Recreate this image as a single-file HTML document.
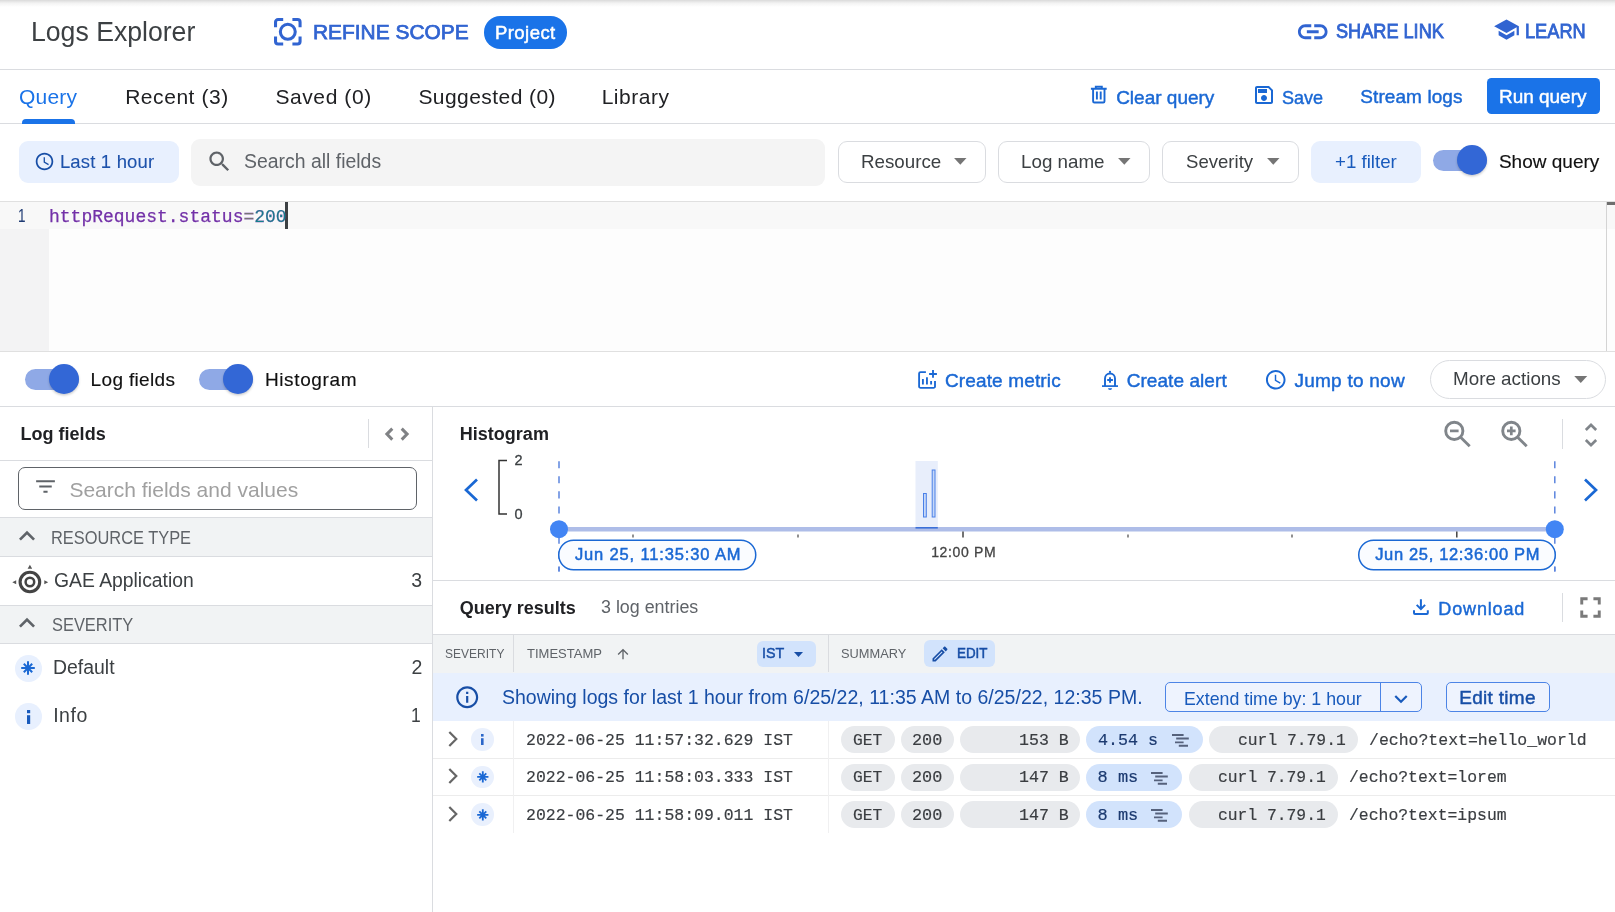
<!DOCTYPE html>
<html lang="en">
<head>
<meta charset="utf-8">
<title>Logs Explorer</title>
<style>
*{box-sizing:border-box;margin:0;padding:0}
html,body{width:1615px;height:912px;overflow:hidden;background:#fff}
body{position:relative;font-family:"Liberation Sans",sans-serif;-webkit-font-smoothing:antialiased}
.a{position:absolute}
.t{position:absolute;white-space:nowrap;transform-origin:0 0;font-family:"Liberation Sans",sans-serif}
.t.m{font-family:"Liberation Mono",monospace}
.hl{position:absolute;left:0;width:1615px;height:1px;background:#dadce0}
.vl{position:absolute;width:1px;background:#dadce0}
svg{position:absolute;overflow:visible}
.chip{position:absolute;height:27px;border-radius:13.5px;background:#e8eaed}
.chip.b{background:#d2e3fc}
.btn{position:absolute;border:1px solid #dadce0;border-radius:9px;background:#fff}
</style>
</head>
<body>
<div id="root" style="position:absolute;left:0;top:0;width:1615px;height:912px;will-change:transform">
<!-- top shadow -->
<div class="a" style="left:0;top:0;width:1615px;height:7px;background:linear-gradient(#dadada,#f3f3f3 45%,#fff)"></div>

<!-- ===== header ===== -->
<div class="hl" style="top:69px"></div>
<!-- refine scope icon -->
<svg style="left:274.200px;top:18.200px" width="27.600" height="27.600" viewBox="0 0 27 27" fill="none" stroke="#3164d1" stroke-width="3">
 <path d="M1.5 9V4a2.5 2.5 0 0 1 2.5-2.5h5M18 1.5h5a2.5 2.5 0 0 1 2.500 2.5v5M25.500 18v5a2.500 2.500 0 0 1-2.500 2.500h-5M9 25.500H4a2.500 2.500 0 0 1-2.500-2.500v-5"/>
 <circle cx="13.5" cy="13.500" r="7.300"/>
</svg>
<div class="a" style="left:484px;top:16px;width:83px;height:32.500px;border-radius:16.250px;background:#1a73e8"></div>
<!-- link icon -->
<svg style="left:1295px;top:13.750px" width="35.500" height="35.500" viewBox="0 0 24 24" fill="#3164d1"><path d="M3.9 12c0-1.710 1.390-3.100 3.100-3.100h4V7H7c-2.760 0-5 2.240-5 5s2.240 5 5 5h4v-1.900H7c-1.710 0-3.100-1.390-3.100-3.100zM8 13h8v-2H8v2zm9-6h-4v1.900h4c1.710 0 3.100 1.390 3.100 3.100s-1.390 3.100-3.100 3.100h-4V17h4c2.760 0 5-2.240 5-5s-2.240-5-5-5z"/></svg>
<!-- school icon -->
<svg style="left:1493px;top:16.200px" width="27" height="27" viewBox="0 0 24 24" fill="#3164d1"><path d="M5 13.180v4L12 21l7-3.820v-4L12 17l-7-3.820zM12 3L1 9l11 6 9-4.910V17h2V9L12 3z"/></svg>

<!-- ===== tabs row ===== -->
<div class="hl" style="top:123px"></div>
<div class="a" style="left:22px;top:119px;width:53px;height:4.500px;background:#1a73e8;border-radius:4px 4px 0 0"></div>
<!-- trash icon -->
<svg style="left:1090px;top:85px" width="18" height="20" viewBox="1090 85 18 20" fill="none" stroke="#1a68d4" stroke-width="1.900">
 <path d="M1090.900 88.700h15.800M1095.800 88V86.600h6v1.400M1093.100 88.700v12.500a1.300 1.300 0 0 0 1.300 1.300h8.800a1.300 1.300 0 0 0 1.300-1.300V88.700M1096.900 91.500v8M1100.700 91.500v8"/>
</svg>
<!-- save icon -->
<svg style="left:1251.500px;top:83px" width="24" height="24" viewBox="0 0 24 24" fill="#1a68d4"><path d="M17 3H5c-1.110 0-2 .9-2 2v14c0 1.100.890 2 2 2h14c1.100 0 2-.9 2-2V7l-4-4zm2 16H5V5h11.170L19 7.830V19zm-7-7c-1.660 0-3 1.340-3 3s1.340 3 3 3 3-1.340 3-3-1.340-3-3-3zM6 6h9v4H6z"/></svg>
<div class="a" style="left:1487px;top:78px;width:113px;height:36px;border-radius:4.500px;background:#1a73e8"></div>

<!-- ===== filter row ===== -->
<div class="a" style="left:19px;top:141px;width:160px;height:42px;border-radius:9px;background:#e8f0fe"></div>
<svg style="left:34px;top:150.800px" width="21" height="21" viewBox="0 0 24 24" fill="#174ea6"><path d="M11.990 2C6.470 2 2 6.480 2 12s4.470 10 9.990 10C17.520 22 22 17.520 22 12S17.520 2 11.990 2zM12 20c-4.420 0-8-3.580-8-8s3.580-8 8-8 8 3.580 8 8-3.580 8-8 8zm.5-13H11v6l5.250 3.150.75-1.230-4.500-2.670z"/></svg>
<div class="a" style="left:191px;top:138.500px;width:634px;height:47px;border-radius:9px;background:#f4f4f4"></div>
<svg style="left:205.500px;top:148px" width="27" height="27" viewBox="0 0 24 24" fill="#5f6368"><path d="M15.500 14h-.79l-.28-.27C15.410 12.590 16 11.110 16 9.500 16 5.910 13.090 3 9.500 3S3 5.910 3 9.500 5.910 16 9.500 16c1.610 0 3.090-.59 4.230-1.570l.27.280v.79l5 4.990L20.490 19l-4.990-5zm-6 0C7.010 14 5 11.990 5 9.500S7.010 5 9.500 5 14 7.010 14 9.500 11.990 14 9.500 14z"/></svg>
<div class="btn" style="left:838px;top:141px;width:148px;height:42px"></div>
<div class="btn" style="left:998px;top:141px;width:151.500px;height:42px"></div>
<div class="btn" style="left:1162px;top:141px;width:137px;height:42px"></div>
<svg style="left:954.200px;top:157.800px" width="12.600" height="6.700" viewBox="0 0 13 7" fill="#757575"><path d="M0 0h13L6.500 7z"/></svg>
<svg style="left:1117.700px;top:157.800px" width="12.600" height="6.700" viewBox="0 0 13 7" fill="#757575"><path d="M0 0h13L6.500 7z"/></svg>
<svg style="left:1267.200px;top:157.800px" width="12.600" height="6.700" viewBox="0 0 13 7" fill="#757575"><path d="M0 0h13L6.500 7z"/></svg>
<div class="a" style="left:1311px;top:141px;width:110px;height:42px;border-radius:9px;background:#e8f0fe"></div>
<!-- toggle: show query -->
<div class="a" style="left:1433px;top:150px;width:54px;height:21px;border-radius:10.500px;background:#8fa9e6"></div>
<div class="a" style="left:1457px;top:145px;width:30px;height:30px;border-radius:15px;background:#3367d6;box-shadow:0 1.500px 2.500px rgba(0,0,0,.2)"></div>

<!-- ===== editor ===== -->
<div class="a" style="left:0;top:201px;width:1615px;height:151px;background:#fdfdfd"></div>
<div class="a" style="left:0;top:229px;width:48.500px;height:122px;background:#f3f3f4"></div>
<div class="a" style="left:0;top:202px;width:1615px;height:27px;background:#f8f8f8"></div>
<div class="hl" style="top:201px;background:#e0e0e0"></div>
<div class="hl" style="top:351px;background:#e0e0e0"></div>
<div class="a" style="left:285.300px;top:202px;width:2.800px;height:26.500px;background:#3c4043"></div>
<div class="a" style="left:1606px;top:202px;width:1px;height:149px;background:#d4d4d4"></div>
<div class="a" style="left:1606.500px;top:202px;width:8.500px;height:3px;background:#6e6e6e"></div>

<!-- ===== toolbar ===== -->
<div class="hl" style="top:406px"></div>
<div class="a" style="left:25px;top:369px;width:54px;height:21px;border-radius:10.500px;background:#8fa9e6"></div>
<div class="a" style="left:49px;top:364px;width:30px;height:30px;border-radius:15px;background:#3367d6;box-shadow:0 1.500px 2.500px rgba(0,0,0,.2)"></div>
<div class="a" style="left:199px;top:369px;width:54px;height:21px;border-radius:10.500px;background:#8fa9e6"></div>
<div class="a" style="left:223px;top:364px;width:30px;height:30px;border-radius:15px;background:#3367d6;box-shadow:0 1.500px 2.500px rgba(0,0,0,.2)"></div>
<!-- add chart -->
<svg style="left:912px;top:364px" width="30" height="30" viewBox="912 364 30 30" fill="none" stroke="#1a68d4" stroke-width="1.850">
 <path d="M925.900 372.100H920.600a1.500 1.500 0 0 0-1.500 1.500V386.400a1.500 1.500 0 0 0 1.500 1.500H933.500a1.500 1.500 0 0 0 1.500-1.500V380.900"/>
 <path d="M933 370.100V377.750M929.100 374H936.900"/>
 <path d="M922.900 379V384.600M926.950 377.200V384.600M931.100 380.900V384.600"/>
</svg>
<!-- add alert -->
<svg style="left:1098px;top:366px" width="24" height="28" viewBox="1098 366 24 28" fill="none" stroke="#1a68d4" stroke-width="1.900">
 <path d="M1105 386V378.500a5 5 0 0 1 10 0V386"/>
 <path d="M1102 386.100H1118" stroke-width="1.700"/>
 <path d="M1110 377.200V382.700M1107.200 379.950H1112.900"/>
 <circle cx="1110" cy="371.900" r="1.100" fill="#1a68d4" stroke="none"/>
 <path d="M1108 388.300a2.050 1.600 0 0 0 4.100 0z" fill="#1a68d4" stroke="none"/>
</svg>
<!-- clock -->
<svg style="left:1264px;top:368px" width="23.500" height="23.500" viewBox="0 0 24 24" fill="#1a68d4"><path d="M11.990 2C6.470 2 2 6.480 2 12s4.470 10 9.990 10C17.520 22 22 17.520 22 12S17.520 2 11.990 2zM12 20c-4.420 0-8-3.580-8-8s3.580-8 8-8 8 3.580 8 8-3.580 8-8 8zm.5-13H11v6l5.250 3.150.75-1.230-4.500-2.670z"/></svg>
<div class="btn" style="left:1430px;top:360px;width:176px;height:39px;border-radius:19.500px"></div>
<svg style="left:1573.500px;top:376px" width="13.500" height="7" viewBox="0 0 13 7" fill="#757575"><path d="M0 0h13L6.500 7z"/></svg>

<!-- ===== left panel ===== -->
<div class="vl" style="left:432px;top:407px;height:505px"></div>
<div class="vl" style="left:368px;top:418.500px;height:29.500px"></div>
<svg style="left:380px;top:424px" width="34" height="20" viewBox="380 424 34 20" fill="none" stroke="#808285" stroke-width="3"><path d="M392.300 428.600L386.900 434.100L392.300 439.600M401.700 428.600L407.100 434.100L401.700 439.600"/></svg>
<div class="hl" style="top:460px;width:432px"></div>
<div class="a" style="left:18px;top:467px;width:399px;height:42.500px;border:1px solid #5f6368;border-radius:7px;background:#fff"></div>
<svg style="left:33px;top:474.300px" width="25" height="25" viewBox="0 0 24 24" fill="#5f6368"><path d="M10 18h4v-2h-4v2zM3 6v2h18V6H3zm3 7h12v-2H6v2z"/></svg>
<div class="a" style="left:0;top:517px;width:432px;height:40px;background:#f1f3f4;border-top:1px solid #dadce0;border-bottom:1px solid #dadce0"></div>
<svg style="left:11px;top:520px" width="32" height="32" viewBox="0 0 24 24" fill="#5f6368"><path d="M12 8l-6 6 1.410 1.410L12 10.830l4.590 4.580L18 14z"/></svg>
<!-- GAE icon -->
<svg style="left:10px;top:562px" width="40" height="34" viewBox="10 562 40 34" fill="none" stroke="#444">
 <circle cx="29.900" cy="582" r="9.800" stroke-width="3.100"/>
 <circle cx="29.900" cy="582" r="4.300" stroke-width="2.500"/>
 <path d="M29.900 564.800l2.300 3.900h-4.600z M12.300 582.200l3.900-2v4z M48.200 582.200l-3.900-2v4z" fill="#555" stroke="none"/>
</svg>
<div class="a" style="left:0;top:605px;width:432px;height:39px;background:#f1f3f4;border-top:1px solid #dadce0;border-bottom:1px solid #dadce0"></div>
<svg style="left:11px;top:607px" width="32" height="32" viewBox="0 0 24 24" fill="#5f6368"><path d="M12 8l-6 6 1.410 1.410L12 10.830l4.590 4.580L18 14z"/></svg>
<div class="a" style="left:15px;top:655px;width:26.500px;height:26.500px;border-radius:50%;background:#e8f0fe"></div>
<svg style="left:21.200px;top:661px" width="14" height="14" viewBox="-7 -7 14 14" stroke="#1a68d4" stroke-width="2"><path d="M0-6.800V6.800M-6.800 0H6.800M-4.200-4.200L4.200 4.200M-4.200 4.200L4.200-4.200"/></svg>
<div class="a" style="left:15px;top:703px;width:26.500px;height:26.500px;border-radius:50%;background:#e8f0fe"></div>
<svg style="left:26.500px;top:709.500px" width="3.200" height="14" viewBox="0 0 3.200 14" fill="#185abc"><rect x="0" y="0" width="3.200" height="3.200"/><rect x="0" y="5.200" width="3.200" height="8.800"/></svg>

<!-- ===== histogram ===== -->
<svg style="left:1440px;top:415px" width="100" height="40" viewBox="1440 415 100 40" fill="none" stroke="#80858a" stroke-width="2.900">
 <circle cx="1454.300" cy="430.900" r="8.600"/><path d="M1460.600 437.200L1469.700 446.300" stroke-width="2.800"/><path d="M1450 430.900h8.600" stroke-width="2.700"/>
 <circle cx="1511.300" cy="430.900" r="8.600"/><path d="M1517.600 437.200L1526.700 446.300" stroke-width="2.800"/><path d="M1507 430.900h8.600M1511.300 426.600v8.600" stroke-width="2.700"/>
</svg>
<div class="vl" style="left:1562px;top:419px;height:30px"></div>
<svg style="left:1575.200px;top:419px" width="32" height="32" viewBox="0 0 24 24" fill="#80858a"><path d="M12 5.830L15.170 9l1.410-1.410L12 3 7.410 7.590 8.830 9 12 5.830zm0 12.340L8.830 15l-1.410 1.410L12 21l4.590-4.590L15.170 15 12 18.170z"/></svg>
<svg style="left:432px;top:450px" width="1183" height="130" viewBox="432 450 1183 130" fill="none">
 <path d="M477 479.500L466 490l11 10.500" stroke="#1a68d4" stroke-width="2.700"/>
 <path d="M1585 479.500l11 10.500-11 10.500" stroke="#1a68d4" stroke-width="2.700"/>
 <path d="M507 460.500h-8v53.500h8" stroke="#333" stroke-width="1.500"/>
 <rect x="915.500" y="461" width="22.300" height="66.500" fill="#e8eefb"/>
 <rect x="923.500" y="493.500" width="2.800" height="23.500" fill="#c6d8f8" stroke="#4a80e8" stroke-width="1"/>
 <rect x="932.200" y="470" width="2.800" height="47" fill="#c6d8f8" stroke="#4a80e8" stroke-width="1"/>
 <path d="M559 461.200V571.500M1554.800 461.200V571.500" stroke="#5c85de" stroke-width="1.500" stroke-dasharray="7.100 7.970"/>
 <rect x="559" y="527" width="996" height="4.500" fill="#aebde8"/>
 <rect x="915.500" y="527" width="22.300" height="1.600" fill="#3b6fd8"/>
 <path d="M963 531.500v6M1456.800 531.500v6" stroke="#444" stroke-width="1.500"/>
 <path d="M633 534.500v3M798 534.500v3M1128 534.500v3M1292 534.500v3" stroke="#555" stroke-width="1.300"/>
 <circle cx="559" cy="529.200" r="9" fill="#4285f4"/>
 <circle cx="1554.800" cy="529.200" r="9" fill="#4285f4"/>
 <rect x="558.750" y="540.250" width="197" height="29.500" rx="14.750" fill="#fafcff" stroke="#1a68d4" stroke-width="1.500"/>
 <rect x="1358.750" y="540.250" width="196.500" height="29.500" rx="14.750" fill="#fafcff" stroke="#1a68d4" stroke-width="1.500"/>
 <path d="M559 566.600V571.500M1554.800 566.600V571.500" stroke="#5c85de" stroke-width="1.500"/>
</svg>
<div class="hl" style="left:433px;top:580px;width:1182px"></div>

<!-- ===== query results ===== -->
<svg style="left:1410px;top:596px" width="22" height="22" viewBox="1410 596 22 22" fill="none" stroke="#1a68d4" stroke-width="2"><path d="M1414 610.200v2.700a1 1 0 0 0 1 1h11.800a1 1 0 0 0 1-1v-2.700M1420.900 599.200v9.500M1416.700 604.900l4.200 4.200 4.200-4.200"/></svg>
<div class="vl" style="left:1562px;top:592.500px;height:29px"></div>
<svg style="left:1573px;top:590.300px" width="35" height="35" viewBox="0 0 24 24" fill="#7a7a7a"><path d="M7 14H5v5h5v-2H7v-3zm-2-4h2V7h3V5H5v5zm12 7h-3v2h5v-5h-2v3zM14 5v2h3v3h2V5h-5z"/></svg>
<div class="a" style="left:433px;top:634px;width:1182px;height:38.500px;background:#f1f3f4;border-top:1px solid #dadce0"></div>
<div class="vl" style="left:513px;top:635px;height:37px"></div>
<div class="vl" style="left:828px;top:635px;height:37px"></div>
<svg style="left:614.500px;top:645.500px" width="16" height="16" viewBox="0 0 24 24" fill="#5f6368"><path d="M4 12l1.410 1.410L11 7.830V20h2V7.830l5.580 5.590L20 12l-8-8-8 8z"/></svg>
<div class="a" style="left:757px;top:640.500px;width:59px;height:26px;border-radius:6px;background:#d2e3fc"></div>
<svg style="left:793.750px;top:651.500px" width="9" height="5" viewBox="0 0 13 7" fill="#174ea6"><path d="M0 0h13L6.500 7z"/></svg>
<div class="a" style="left:924.300px;top:640px;width:70.700px;height:26.600px;border-radius:6px;background:#d2e3fc"></div>
<svg style="left:930px;top:644px" width="20" height="20" viewBox="0 0 24 24" fill="#174ea6"><path d="M14.060 9.020l.92.920L5.920 19H5v-.92l9.060-9.060M17.660 3c-.25 0-.51.100-.7.290l-1.830 1.830 3.750 3.750 1.830-1.830c.39-.39.39-1.020 0-1.410l-2.340-2.340c-.2-.2-.45-.29-.71-.29zm-3.600 3.190L3 17.250V21h3.750L17.810 9.940l-3.750-3.750z"/></svg>
<!-- banner -->
<div class="a" style="left:433px;top:672.500px;width:1182px;height:48px;background:#e8f0fe"></div>
<svg style="left:453.800px;top:684.300px" width="26.400" height="26.400" viewBox="0 0 24 24" fill="#174ea6"><path d="M11 7h2v2h-2zm0 4h2v6h-2zm1-9C6.480 2 2 6.480 2 12s4.480 10 10 10 10-4.480 10-10S17.520 2 12 2zm0 18c-4.410 0-8-3.590-8-8s3.590-8 8-8 8 3.590 8 8-3.590 8-8 8z"/></svg>
<div class="a" style="left:1165.400px;top:682px;width:257px;height:29.500px;border:1px solid #4c84e6;border-radius:5px;background:#eef3fe"></div>
<div class="a" style="left:1380px;top:683px;width:1px;height:27.500px;background:#4c84e6"></div>
<svg style="left:1387.500px;top:685.500px" width="26" height="26" viewBox="0 0 24 24" fill="#185abc"><path d="M16.590 8.590L12 13.170 7.410 8.590 6 10l6 6 6-6z"/></svg>
<div class="a" style="left:1446px;top:682px;width:103.600px;height:29.500px;border:1px solid #4c84e6;border-radius:5px;background:#eef3fe"></div>

<!-- rows -->
<div class="hl" style="left:433px;top:758px;width:1182px;background:#ececec"></div>
<div class="hl" style="left:433px;top:795px;width:1182px;background:#ececec"></div>
<div class="vl" style="left:513px;top:721px;height:112px;background:#f0f0f1"></div>
<div class="vl" style="left:828px;top:721px;height:112px;background:#f0f0f1"></div>
<svg style="left:446px;top:728.90px" width="14" height="20" viewBox="446 0 14 20" fill="none" stroke="#666" stroke-width="2.200"><path d="M449.300 2.900L456.300 10L449.300 17.100"/></svg>
<div class="a" style="left:471.300px;top:728.25px;width:22.600px;height:22.600px;border-radius:50%;background:#e9f0fd"></div>
<svg style="left:481.300px;top:734.00px" width="2.600" height="11" viewBox="0 0 2.600 11" fill="#2a66c9"><rect width="2.600" height="2.600"/><rect y="4.200" width="2.600" height="6.800"/></svg>
<div class="chip" style="left:841px;top:726.25px;width:53.750px"></div>
<div class="chip" style="left:901px;top:726.25px;width:53px"></div>
<div class="chip" style="left:959.750px;top:726.25px;width:120px"></div>
<div class="chip b" style="left:1086px;top:726.25px;width:117px"></div>
<svg style="left:1172px;top:734.00px" width="17" height="13" viewBox="0 0 17 13" stroke="#56627c" stroke-width="1.900"><path d="M0 1h11.600M4.200 4.500h12.600M3 8.400h8.600M6.800 11.800h9.200"/></svg>
<div class="chip" style="left:1209px;top:726.25px;width:149.300px"></div>
<svg style="left:446px;top:766.40px" width="14" height="20" viewBox="446 0 14 20" fill="none" stroke="#666" stroke-width="2.200"><path d="M449.300 2.900L456.300 10L449.300 17.100"/></svg>
<div class="a" style="left:471.300px;top:765.75px;width:22.600px;height:22.600px;border-radius:50%;background:#e9f0fd"></div>
<svg style="left:476.800px;top:771.30px" width="11.600" height="11.600" viewBox="-7 -7 14 14" stroke="#1a68d4" stroke-width="2.200"><path d="M0-6.800V6.800M-6.800 0H6.800M-4.200-4.200L4.200 4.200M-4.200 4.200L4.200-4.200"/></svg>
<div class="chip" style="left:841px;top:763.75px;width:53.750px"></div>
<div class="chip" style="left:901px;top:763.75px;width:53px"></div>
<div class="chip" style="left:959.750px;top:763.75px;width:120px"></div>
<div class="chip b" style="left:1086px;top:763.75px;width:96px"></div>
<svg style="left:1151px;top:771.50px" width="17" height="13" viewBox="0 0 17 13" stroke="#56627c" stroke-width="1.900"><path d="M0 1h11.600M4.200 4.500h12.600M3 8.400h8.600M6.800 11.800h9.200"/></svg>
<div class="chip" style="left:1189px;top:763.75px;width:149.300px"></div>
<svg style="left:446px;top:803.90px" width="14" height="20" viewBox="446 0 14 20" fill="none" stroke="#666" stroke-width="2.200"><path d="M449.300 2.900L456.300 10L449.300 17.100"/></svg>
<div class="a" style="left:471.300px;top:803.25px;width:22.600px;height:22.600px;border-radius:50%;background:#e9f0fd"></div>
<svg style="left:476.800px;top:808.80px" width="11.600" height="11.600" viewBox="-7 -7 14 14" stroke="#1a68d4" stroke-width="2.200"><path d="M0-6.800V6.800M-6.800 0H6.800M-4.200-4.200L4.200 4.200M-4.200 4.200L4.200-4.200"/></svg>
<div class="chip" style="left:841px;top:801.25px;width:53.750px"></div>
<div class="chip" style="left:901px;top:801.25px;width:53px"></div>
<div class="chip" style="left:959.750px;top:801.25px;width:120px"></div>
<div class="chip b" style="left:1086px;top:801.25px;width:96px"></div>
<svg style="left:1151px;top:809.00px" width="17" height="13" viewBox="0 0 17 13" stroke="#56627c" stroke-width="1.900"><path d="M0 1h11.600M4.200 4.500h12.600M3 8.400h8.600M6.800 11.800h9.200"/></svg>
<div class="chip" style="left:1189px;top:801.25px;width:149.300px"></div>
<span id="t_title" class="t" style="left:30.78px;top:12.00px;font-size:27px;line-height:40px;color:#3c4043;transform:scaleX(0.9860);">Logs Explorer</span>
<span id="t_refine" class="t" style="left:312.66px;top:12.00px;font-size:21px;line-height:40px;color:#3164d1;transform:scaleX(0.9952);-webkit-text-stroke:0.75px #3164d1;">REFINE SCOPE</span>
<span id="t_project" class="t" style="left:494.95px;top:13.00px;font-size:18.5px;line-height:40px;color:#fff;letter-spacing:0.450px;-webkit-text-stroke:0.5px #fff;">Project</span>
<span id="t_share" class="t" style="left:1336.33px;top:11.00px;font-size:19.5px;line-height:40px;color:#3164d1;transform:scaleX(0.9302);-webkit-text-stroke:0.8px #3164d1;">SHARE LINK</span>
<span id="t_learn" class="t" style="left:1524.93px;top:11.00px;font-size:19.5px;line-height:40px;color:#3164d1;transform:scaleX(0.9328);-webkit-text-stroke:0.8px #3164d1;">LEARN</span>
<span id="t_tab1" class="t" style="left:18.90px;top:77.00px;font-size:21px;line-height:40px;color:#1a73e8;letter-spacing:0.250px;">Query</span>
<span id="t_tab2" class="t" style="left:125.15px;top:77.00px;font-size:21px;line-height:40px;color:#202124;letter-spacing:0.556px;">Recent (3)</span>
<span id="t_tab3" class="t" style="left:275.40px;top:77.00px;font-size:21px;line-height:40px;color:#202124;letter-spacing:0.594px;">Saved (0)</span>
<span id="t_tab4" class="t" style="left:418.40px;top:77.00px;font-size:21px;line-height:40px;color:#202124;letter-spacing:0.438px;">Suggested (0)</span>
<span id="t_tab5" class="t" style="left:601.65px;top:77.00px;font-size:21px;line-height:40px;color:#202124;letter-spacing:0.542px;">Library</span>
<span id="t_clear" class="t" style="left:1116.15px;top:78.00px;font-size:19px;line-height:40px;color:#1a68d4;-webkit-text-stroke:0.45px #1a68d4;">Clear query</span>
<span id="t_save" class="t" style="left:1281.93px;top:78.00px;font-size:19px;line-height:40px;color:#1a68d4;transform:scaleX(0.9491);-webkit-text-stroke:0.45px #1a68d4;">Save</span>
<span id="t_stream" class="t" style="left:1360.30px;top:77.00px;font-size:19px;line-height:40px;color:#1a68d4;letter-spacing:0.080px;-webkit-text-stroke:0.45px #1a68d4;">Stream logs</span>
<span id="t_run" class="t" style="left:1499.15px;top:77.00px;font-size:19px;line-height:40px;color:#fff;transform:scaleX(0.9971);-webkit-text-stroke:0.45px #fff;">Run query</span>
<span id="t_last" class="t" style="left:59.90px;top:142.00px;font-size:18.5px;line-height:40px;color:#1d52ab;letter-spacing:0.175px;-webkit-text-stroke:0.1px #1d52ab;">Last 1 hour</span>
<span id="t_search" class="t" style="left:243.90px;top:141.00px;font-size:19.5px;line-height:40px;color:#5f6368;transform:scaleX(0.9963);">Search all fields</span>
<span id="t_resource" class="t" style="left:860.92px;top:142.00px;font-size:19px;line-height:40px;color:#3c4043;transform:scaleX(0.9873);">Resource</span>
<span id="t_logname" class="t" style="left:1020.92px;top:142.00px;font-size:19px;line-height:40px;color:#3c4043;transform:scaleX(0.9878);">Log name</span>
<span id="t_severity" class="t" style="left:1185.92px;top:142.00px;font-size:19px;line-height:40px;color:#3c4043;transform:scaleX(0.9778);">Severity</span>
<span id="t_filter" class="t" style="left:1334.72px;top:142.00px;font-size:19px;line-height:40px;color:#185abc;transform:scaleX(0.9837);">+1 filter</span>
<span id="t_showq" class="t" style="left:1498.95px;top:142.00px;font-size:19px;line-height:40px;color:#111;-webkit-text-stroke:0.15px #111;">Show query</span>
<span id="t_ln" class="t" style="left:18.06px;top:196.00px;font-size:18px;line-height:40px;color:#1f3b73;transform:scaleX(0.7500);">1</span>
<span id="t_logf" class="t" style="left:90.60px;top:360.00px;font-size:19px;line-height:40px;color:#111;letter-spacing:0.339px;-webkit-text-stroke:0.15px #111;">Log fields</span>
<span id="t_histo" class="t" style="left:264.90px;top:360.00px;font-size:19px;line-height:40px;color:#111;letter-spacing:0.638px;-webkit-text-stroke:0.15px #111;">Histogram</span>
<span id="t_cmetric" class="t" style="left:944.95px;top:361.00px;font-size:19px;line-height:40px;color:#1a68d4;letter-spacing:0.142px;-webkit-text-stroke:0.45px #1a68d4;">Create metric</span>
<span id="t_calert" class="t" style="left:1126.65px;top:361.00px;font-size:19px;line-height:40px;color:#1a68d4;letter-spacing:0.068px;-webkit-text-stroke:0.45px #1a68d4;">Create alert</span>
<span id="t_jump" class="t" style="left:1294.40px;top:361.00px;font-size:19px;line-height:40px;color:#1a68d4;letter-spacing:0.250px;-webkit-text-stroke:0.45px #1a68d4;">Jump to now</span>
<span id="t_more" class="t" style="left:1452.91px;top:359.00px;font-size:19px;line-height:40px;color:#3c4043;transform:scaleX(0.9906);">More actions</span>
<span id="t_lfh" class="t" style="left:20.55px;top:414.00px;font-size:18px;line-height:40px;color:#202124;letter-spacing:0.011px;font-weight:700;">Log fields</span>
<span id="t_sfv" class="t" style="left:69.40px;top:470.00px;font-size:21px;line-height:40px;color:#a0a0a0;">Search fields and values</span>
<span id="t_restype" class="t" style="left:51.03px;top:518.00px;font-size:18px;line-height:40px;color:#5f6368;transform:scaleX(0.9109);">RESOURCE TYPE</span>
<span id="t_gae" class="t" style="left:53.91px;top:560.00px;font-size:19.5px;line-height:40px;color:#3c4043;transform:scaleX(0.9917);">GAE Application</span>
<span id="t_n3" class="t" style="left:411.18px;top:560.00px;font-size:19.5px;line-height:40px;color:#3c4043;">3</span>
<span id="t_sevh" class="t" style="left:51.72px;top:605.00px;font-size:18px;line-height:40px;color:#5f6368;transform:scaleX(0.9117);">SEVERITY</span>
<span id="t_default" class="t" style="left:53.41px;top:647.00px;font-size:19.5px;line-height:40px;color:#3c4043;transform:scaleX(0.9959);">Default</span>
<span id="t_n2" class="t" style="left:411.50px;top:647.00px;font-size:19.5px;line-height:40px;color:#3c4043;">2</span>
<span id="t_info" class="t" style="left:53.15px;top:695.00px;font-size:19.5px;line-height:40px;color:#3c4043;letter-spacing:0.533px;">Info</span>
<span id="t_n1" class="t" style="left:411.46px;top:695.00px;font-size:19.5px;line-height:40px;color:#3c4043;transform:scaleX(0.8941);">1</span>
<span id="t_hh" class="t" style="left:459.65px;top:414.00px;font-size:18px;line-height:40px;color:#202124;letter-spacing:0.031px;font-weight:700;">Histogram</span>
<span id="t_y2" class="t" style="left:514.50px;top:440.00px;font-size:14.5px;line-height:40px;color:#3c4043;-webkit-text-stroke:0.3px #3c4043;">2</span>
<span id="t_y0" class="t" style="left:514.38px;top:494.00px;font-size:14.5px;line-height:40px;color:#3c4043;-webkit-text-stroke:0.3px #3c4043;">0</span>
<span id="t_jun1" class="t" style="left:574.90px;top:534.00px;font-size:16.5px;line-height:40px;color:#1a68d4;letter-spacing:0.861px;-webkit-text-stroke:0.5px #1a68d4;">Jun 25, 11:35:30 AM</span>
<span id="t_noon" class="t" style="left:931.15px;top:532.00px;font-size:14px;line-height:40px;color:#444;letter-spacing:0.643px;-webkit-text-stroke:0.3px #444;">12:00 PM</span>
<span id="t_jun2" class="t" style="left:1375.15px;top:534.00px;font-size:16.5px;line-height:40px;color:#1a68d4;letter-spacing:0.667px;-webkit-text-stroke:0.5px #1a68d4;">Jun 25, 12:36:00 PM</span>
<span id="t_qr" class="t" style="left:459.65px;top:588.00px;font-size:18px;line-height:40px;color:#202124;font-weight:700;">Query results</span>
<span id="t_3log" class="t" style="left:600.66px;top:587.00px;font-size:18px;line-height:40px;color:#5f6368;transform:scaleX(0.9922);">3 log entries</span>
<span id="t_dl" class="t" style="left:1438.35px;top:589.00px;font-size:18px;line-height:40px;color:#1a68d4;letter-spacing:0.843px;-webkit-text-stroke:0.45px #1a68d4;">Download</span>
<span id="t_hsev" class="t" style="left:445.43px;top:634.00px;font-size:13.5px;line-height:40px;color:#5f6368;transform:scaleX(0.8901);">SEVERITY</span>
<span id="t_hts" class="t" style="left:526.66px;top:634.00px;font-size:13.5px;line-height:40px;color:#5f6368;transform:scaleX(0.9642);">TIMESTAMP</span>
<span id="t_ist" class="t" style="left:762.21px;top:633.00px;font-size:15px;line-height:40px;color:#174ea6;transform:scaleX(0.9545);-webkit-text-stroke:0.45px #174ea6;">IST</span>
<span id="t_hsum" class="t" style="left:840.89px;top:634.00px;font-size:13.5px;line-height:40px;color:#5f6368;transform:scaleX(0.9496);">SUMMARY</span>
<span id="t_edit" class="t" style="left:957.48px;top:633.00px;font-size:14.5px;line-height:40px;color:#174ea6;transform:scaleX(0.9219);-webkit-text-stroke:0.5px #174ea6;">EDIT</span>
<span id="t_banner" class="t" style="left:501.90px;top:677.00px;font-size:19.5px;line-height:40px;color:#174ea6;letter-spacing:0.021px;">Showing logs for last 1 hour from 6/25/22, 11:35 AM to 6/25/22, 12:35 PM.</span>
<span id="t_extend" class="t" style="left:1184.00px;top:679.00px;font-size:19px;line-height:40px;color:#185abc;transform:scaleX(0.9349);">Extend time by: 1 hour</span>
<span id="t_edittime" class="t" style="left:1459.15px;top:678.00px;font-size:19px;line-height:40px;color:#174ea6;letter-spacing:0.312px;-webkit-text-stroke:0.45px #174ea6;">Edit time</span>
<span id="t_code" class="t m" style="left:49.00px;top:197.00px;font-size:18px;line-height:40px;color:#7331a8;-webkit-text-stroke:0.25px #7331a8;">httpRequest.status<span style="color:#757575">=</span><span style="color:#12828a">200</span></span>
<span id="r0_ts" class="t m" style="left:525.53px;top:721.00px;font-size:17px;line-height:40px;color:#3a3d41;transform:scaleX(0.9690);-webkit-text-stroke:0.18px #3a3d41;">2022-06-25 11:57:32.629 IST</span>
<span id="r0_get" class="t m" style="left:852.78px;top:721.00px;font-size:17px;line-height:40px;color:#3a3d41;transform:scaleX(0.9573);-webkit-text-stroke:0.18px #3a3d41;">GET</span>
<span id="r0_200" class="t m" style="left:912.01px;top:721.00px;font-size:17px;line-height:40px;color:#3a3d41;transform:scaleX(0.9913);-webkit-text-stroke:0.18px #3a3d41;">200</span>
<span id="r0_size" class="t m" style="left:1018.78px;top:721.00px;font-size:17px;line-height:40px;color:#3a3d41;transform:scaleX(0.9747);-webkit-text-stroke:0.18px #3a3d41;">153 B</span>
<span id="r0_lat" class="t m" style="left:1098.16px;top:721.00px;font-size:17px;line-height:40px;color:#1c3a70;transform:scaleX(0.9806);-webkit-text-stroke:0.18px #1c3a70;">4.54 s</span>
<span id="r0_curl" class="t m" style="left:1237.74px;top:721.00px;font-size:17px;line-height:40px;color:#3a3d41;transform:scaleX(0.9602);-webkit-text-stroke:0.18px #3a3d41;">curl 7.79.1</span>
<span id="r0_path" class="t m" style="left:1368.57px;top:721.00px;font-size:17px;line-height:40px;color:#3a3d41;transform:scaleX(0.9696);-webkit-text-stroke:0.18px #3a3d41;">/echo?text=hello_world</span>
<span id="r1_ts" class="t m" style="left:525.53px;top:758.00px;font-size:17px;line-height:40px;color:#3a3d41;transform:scaleX(0.9690);-webkit-text-stroke:0.18px #3a3d41;">2022-06-25 11:58:03.333 IST</span>
<span id="r1_get" class="t m" style="left:852.78px;top:758.00px;font-size:17px;line-height:40px;color:#3a3d41;transform:scaleX(0.9573);-webkit-text-stroke:0.18px #3a3d41;">GET</span>
<span id="r1_200" class="t m" style="left:912.01px;top:758.00px;font-size:17px;line-height:40px;color:#3a3d41;transform:scaleX(0.9913);-webkit-text-stroke:0.18px #3a3d41;">200</span>
<span id="r1_size" class="t m" style="left:1018.78px;top:758.00px;font-size:17px;line-height:40px;color:#3a3d41;transform:scaleX(0.9747);-webkit-text-stroke:0.18px #3a3d41;">147 B</span>
<span id="r1_lat" class="t m" style="left:1097.50px;top:758.00px;font-size:17px;line-height:40px;color:#1c3a70;-webkit-text-stroke:0.18px #1c3a70;">8 ms</span>
<span id="r1_curl" class="t m" style="left:1217.74px;top:758.00px;font-size:17px;line-height:40px;color:#3a3d41;transform:scaleX(0.9602);-webkit-text-stroke:0.18px #3a3d41;">curl 7.79.1</span>
<span id="r1_path" class="t m" style="left:1348.98px;top:758.00px;font-size:17px;line-height:40px;color:#3a3d41;transform:scaleX(0.9657);-webkit-text-stroke:0.18px #3a3d41;">/echo?text=lorem</span>
<span id="r2_ts" class="t m" style="left:525.53px;top:796.00px;font-size:17px;line-height:40px;color:#3a3d41;transform:scaleX(0.9690);-webkit-text-stroke:0.18px #3a3d41;">2022-06-25 11:58:09.011 IST</span>
<span id="r2_get" class="t m" style="left:852.78px;top:796.00px;font-size:17px;line-height:40px;color:#3a3d41;transform:scaleX(0.9573);-webkit-text-stroke:0.18px #3a3d41;">GET</span>
<span id="r2_200" class="t m" style="left:912.01px;top:796.00px;font-size:17px;line-height:40px;color:#3a3d41;transform:scaleX(0.9913);-webkit-text-stroke:0.18px #3a3d41;">200</span>
<span id="r2_size" class="t m" style="left:1018.78px;top:796.00px;font-size:17px;line-height:40px;color:#3a3d41;transform:scaleX(0.9747);-webkit-text-stroke:0.18px #3a3d41;">147 B</span>
<span id="r2_lat" class="t m" style="left:1097.50px;top:796.00px;font-size:17px;line-height:40px;color:#1c3a70;-webkit-text-stroke:0.18px #1c3a70;">8 ms</span>
<span id="r2_curl" class="t m" style="left:1217.74px;top:796.00px;font-size:17px;line-height:40px;color:#3a3d41;transform:scaleX(0.9602);-webkit-text-stroke:0.18px #3a3d41;">curl 7.79.1</span>
<span id="r2_path" class="t m" style="left:1348.98px;top:796.00px;font-size:17px;line-height:40px;color:#3a3d41;transform:scaleX(0.9657);-webkit-text-stroke:0.18px #3a3d41;">/echo?text=ipsum</span>
</div>
</body>
</html>
